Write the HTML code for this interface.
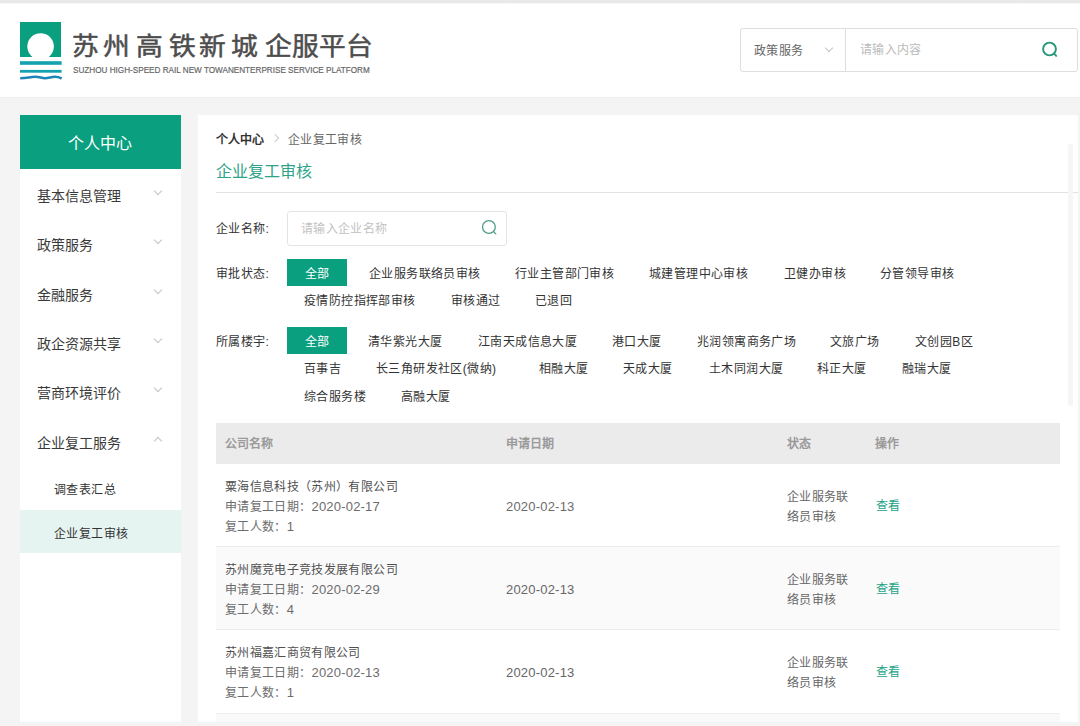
<!DOCTYPE html>
<html lang="zh-CN">
<head>
<meta charset="utf-8">
<style>
*{margin:0;padding:0;box-sizing:border-box}
html,body{width:1080px;height:726px;overflow:hidden}
body{position:relative;background:#f4f4f5;font-family:"Liberation Sans",sans-serif;color:#333}
.a{position:absolute;white-space:nowrap}
.topband{left:0;top:0;width:1080px;height:4px;background:linear-gradient(#ececec,#e6e6e6 40%,#eeeeee 70%,#fafafa)}
.header{left:0;top:4px;width:1080px;height:93px;background:#fff;box-shadow:0 1px 0 #efefef}
.t12{font-size:12px;line-height:20px;letter-spacing:0.35px}
.h12{font-size:12px;line-height:20px;font-weight:bold;color:#9a9a9a}
.t13{font-size:12px;line-height:20px;letter-spacing:0.4px}
.d13{font-size:13px;letter-spacing:0.2px}
.t14{font-size:14px;line-height:20px;color:#3a3a3a}
.t16{font-size:16px;line-height:20px}
.chev{position:absolute;width:6px;height:6px;border-right:1px solid #c4c4c4;border-bottom:1px solid #c4c4c4;transform:rotate(45deg)}
.chevup{position:absolute;width:6px;height:6px;border-left:1px solid #c4c4c4;border-top:1px solid #c4c4c4;transform:rotate(45deg)}
.btn{position:absolute;background:#0a9f7f;color:#fff;font-size:12px;letter-spacing:0.4px;text-align:center;padding-top:1.5px}
.ttl{top:26px;font-size:25px;line-height:40px;color:#4d4d4d;-webkit-text-stroke:0.5px #4d4d4d;transform-origin:0 0;transform:scaleX(1.07)}
.tag{position:absolute;font-size:12px;letter-spacing:0.4px;line-height:20px;color:#333;white-space:nowrap}
</style>
</head>
<body>
<div class="a topband"></div>
<div class="a header"></div>

<!-- logo -->
<svg class="a" style="left:0;top:0" width="80" height="90" viewBox="0 0 80 90">
  <path d="M20 22 H61 V57 H48.8 A13.3 13.3 0 1 0 32.4 57 H20 Z" fill="#0a9f7f"/>
  <rect x="20" y="61.2" width="41.6" height="3.6" fill="#14a2b0"/>
  <rect x="20" y="69.9" width="41.6" height="2.8" fill="#14a2b0"/>
  <path d="M20.2 78.2 C27 78.2 30 76.8 35 76.8 C40 76.8 41 78.2 45 78.2 C49 78.2 51 76.8 55 76.8 C59 76.8 60 77.8 61.6 78.6" stroke="#1c84b6" stroke-width="2.5" fill="none"/>
</svg>
<div class="a ttl" style="left:72.2px">苏</div>
<div class="a ttl" style="left:102.9px">州</div>
<div class="a ttl" style="left:135.7px">高</div>
<div class="a ttl" style="left:168.5px">铁</div>
<div class="a ttl" style="left:199.3px">新</div>
<div class="a ttl" style="left:231.0px">城</div>
<div class="a ttl" style="left:264.7px">企</div>
<div class="a ttl" style="left:291.8px">服</div>
<div class="a ttl" style="left:319.3px">平</div>
<div class="a ttl" style="left:346.3px">台</div>
<div class="a" style="left:73px;top:63.6px;font-size:9.8px;line-height:12px;color:#666;-webkit-text-stroke:0.2px #666;transform-origin:0 0;transform:scaleX(0.832)">SUZHOU HIGH-SPEED RAIL NEW TOWANENTERPRISE SERVICE PLATFORM</div>

<!-- header search -->
<div class="a" style="left:740px;top:28px;width:338px;height:44px;border:1px solid #dedede;border-radius:3px;background:#fff"></div>
<div class="a" style="left:845px;top:29px;width:1px;height:42px;background:#dedede"></div>
<div class="a t12" style="left:754px;top:41px;color:#666">政策服务</div>
<div class="chev" style="left:826px;top:45px"></div>
<div class="a t12" style="left:860px;top:40px;color:#bbb">请输入内容</div>
<svg class="a" style="left:1040px;top:41px" width="20" height="20" viewBox="0 0 20 20">
  <circle cx="9.5" cy="8" r="6.4" stroke="#269879" stroke-width="1.9" fill="none"/>
  <path d="M14 12.6 L16.2 14.8" stroke="#269879" stroke-width="1.9" stroke-linecap="round"/>
</svg>

<!-- sidebar -->
<div class="a" style="left:20px;top:115px;width:161px;height:607px;background:#fff"></div>
<div class="a" style="left:20px;top:115px;width:161px;height:54px;background:#0a9f7f"></div>
<div class="a t16" style="left:68px;top:134px;color:#fff">个人中心</div>

<div class="a t14" style="left:37px;top:186px">基本信息管理</div>
<div class="chev" style="left:155px;top:188px"></div>
<div class="a t14" style="left:37px;top:235px">政策服务</div>
<div class="chev" style="left:155px;top:237px"></div>
<div class="a t14" style="left:37px;top:285px">金融服务</div>
<div class="chev" style="left:155px;top:287px"></div>
<div class="a t14" style="left:37px;top:334px">政企资源共享</div>
<div class="chev" style="left:155px;top:336px"></div>
<div class="a t14" style="left:37px;top:383px">营商环境评价</div>
<div class="chev" style="left:155px;top:385px"></div>
<div class="a t14" style="left:37px;top:433px">企业复工服务</div>
<div class="chevup" style="left:155px;top:438px"></div>
<div class="a t13" style="left:54px;top:480px">调查表汇总</div>
<div class="a" style="left:20px;top:510px;width:161px;height:43px;background:#e6f4f1"></div>
<div class="a t13" style="left:54px;top:524px">企业复工审核</div>

<!-- content panel -->
<div class="a" style="left:198px;top:115px;width:880px;height:607px;background:#fff"></div>
<div class="a" style="left:216px;top:130px;font-size:12px;line-height:20px;font-weight:bold;color:#333">个人中心</div>
<div class="a" style="left:272px;top:135px;width:6px;height:6px;border-right:1px solid #ccc;border-top:1px solid #ccc;transform:rotate(45deg)"></div>
<div class="a t12" style="left:288px;top:130px;color:#666">企业复工审核</div>
<div class="a t16" style="left:216px;top:162px;color:#2ea387">企业复工审核</div>
<div class="a" style="left:216px;top:192px;width:862px;height:1px;background:#e2e2e2"></div>

<div class="a t12" style="left:216px;top:219px">企业名称:</div>
<div class="a" style="left:287px;top:211px;width:220px;height:35px;border:1px solid #e4e4e4;border-radius:3px"></div>
<div class="a t12" style="left:301px;top:219px;color:#c2c2c2">请输入企业名称</div>
<svg class="a" style="left:480px;top:219px" width="20" height="20" viewBox="0 0 20 20">
  <circle cx="8.9" cy="8" r="6.4" stroke="#4f9c88" stroke-width="1.3" fill="none"/>
  <path d="M13.5 12.6 L15.8 14.9" stroke="#4f9c88" stroke-width="1.3" stroke-linecap="round"/>
</svg>

<div class="a t12" style="left:216px;top:264px">审批状态:</div>
<div class="btn" style="left:287px;top:259px;width:60px;height:27px;line-height:27px">全部</div>
<div class="tag" style="left:369px;top:264px">企业服务联络员审核</div>
<div class="tag" style="left:515px;top:264px">行业主管部门审核</div>
<div class="tag" style="left:649px;top:264px">城建管理中心审核</div>
<div class="tag" style="left:784px;top:264px">卫健办审核</div>
<div class="tag" style="left:880px;top:264px">分管领导审核</div>
<div class="tag" style="left:304px;top:291px">疫情防控指挥部审核</div>
<div class="tag" style="left:451px;top:291px">审核通过</div>
<div class="tag" style="left:535px;top:291px">已退回</div>

<div class="a t12" style="left:216px;top:332px">所属楼宇:</div>
<div class="btn" style="left:287px;top:327px;width:60px;height:27px;line-height:27px">全部</div>
<div class="tag" style="left:368px;top:332px">清华紫光大厦</div>
<div class="tag" style="left:478px;top:332px">江南天成信息大厦</div>
<div class="tag" style="left:612px;top:332px">港口大厦</div>
<div class="tag" style="left:697px;top:332px">兆润领寓商务广场</div>
<div class="tag" style="left:830px;top:332px">文旅广场</div>
<div class="tag" style="left:915px;top:332px">文创园B区</div>
<div class="tag" style="left:304px;top:359px">百事吉</div>
<div class="tag" style="left:376px;top:359px">长三角研发社区(微纳)</div>
<div class="tag" style="left:539px;top:359px">相融大厦</div>
<div class="tag" style="left:623px;top:359px">天成大厦</div>
<div class="tag" style="left:709px;top:359px">土木同润大厦</div>
<div class="tag" style="left:817px;top:359px">科正大厦</div>
<div class="tag" style="left:902px;top:359px">融瑞大厦</div>
<div class="tag" style="left:304px;top:387px">综合服务楼</div>
<div class="tag" style="left:401px;top:387px">高融大厦</div>

<div class="a" style="left:1068px;top:144px;width:5px;height:262px;border-radius:3px;background:#f6f6f7"></div>
<!-- table -->
<div class="a" style="left:216px;top:423px;width:844px;height:41px;background:#ecebec"></div>
<div class="a h12" style="left:225px;top:434px">公司名称</div>
<div class="a h12" style="left:506px;top:434px">申请日期</div>
<div class="a h12" style="left:787px;top:434px">状态</div>
<div class="a h12" style="left:875px;top:434px">操作</div>

<div class="a" style="left:216px;top:546px;width:844px;height:1px;background:#eeeeee"></div>
<div class="a" style="left:216px;top:547px;width:844px;height:83px;background:#fafafb"></div>
<div class="a" style="left:216px;top:629px;width:844px;height:1px;background:#eeeeee"></div>
<div class="a" style="left:216px;top:713px;width:844px;height:1px;background:#eeeeee"></div>
<div class="a" style="left:216px;top:714px;width:844px;height:8px;background:#f9f9fa"></div>

<div class="a t12" style="left:225px;top:477px;color:#505050">粟海信息科技（苏州）有限公司</div>
<div class="a t12" style="left:225px;top:497px;color:#6c6c6c">申请复工日期：<span class="d13">2020-02-17</span></div>
<div class="a t12" style="left:225px;top:517px;color:#6c6c6c">复工人数：<span class="d13">1</span></div>
<div class="a t12 d13" style="left:506px;top:497px;color:#6c6c6c">2020-02-13</div>
<div class="a t12" style="left:787px;top:487px;color:#666">企业服务联</div>
<div class="a t12" style="left:787px;top:507px;color:#666">络员审核</div>
<div class="a t12" style="left:876px;top:496px;color:#22a386">查看</div>

<div class="a t12" style="left:225px;top:560px;color:#505050">苏州魔竞电子竞技发展有限公司</div>
<div class="a t12" style="left:225px;top:580px;color:#6c6c6c">申请复工日期：<span class="d13">2020-02-29</span></div>
<div class="a t12" style="left:225px;top:600px;color:#6c6c6c">复工人数：<span class="d13">4</span></div>
<div class="a t12 d13" style="left:506px;top:580px;color:#666">2020-02-13</div>
<div class="a t12" style="left:787px;top:570px;color:#666">企业服务联</div>
<div class="a t12" style="left:787px;top:590px;color:#666">络员审核</div>
<div class="a t12" style="left:876px;top:579px;color:#22a386">查看</div>

<div class="a t12" style="left:225px;top:643px;color:#505050">苏州福嘉汇商贸有限公司</div>
<div class="a t12" style="left:225px;top:663px;color:#6c6c6c">申请复工日期：<span class="d13">2020-02-13</span></div>
<div class="a t12" style="left:225px;top:683px;color:#6c6c6c">复工人数：<span class="d13">1</span></div>
<div class="a t12 d13" style="left:506px;top:663px;color:#666">2020-02-13</div>
<div class="a t12" style="left:787px;top:653px;color:#666">企业服务联</div>
<div class="a t12" style="left:787px;top:673px;color:#666">络员审核</div>
<div class="a t12" style="left:876px;top:662px;color:#22a386">查看</div>

</body>
</html>
